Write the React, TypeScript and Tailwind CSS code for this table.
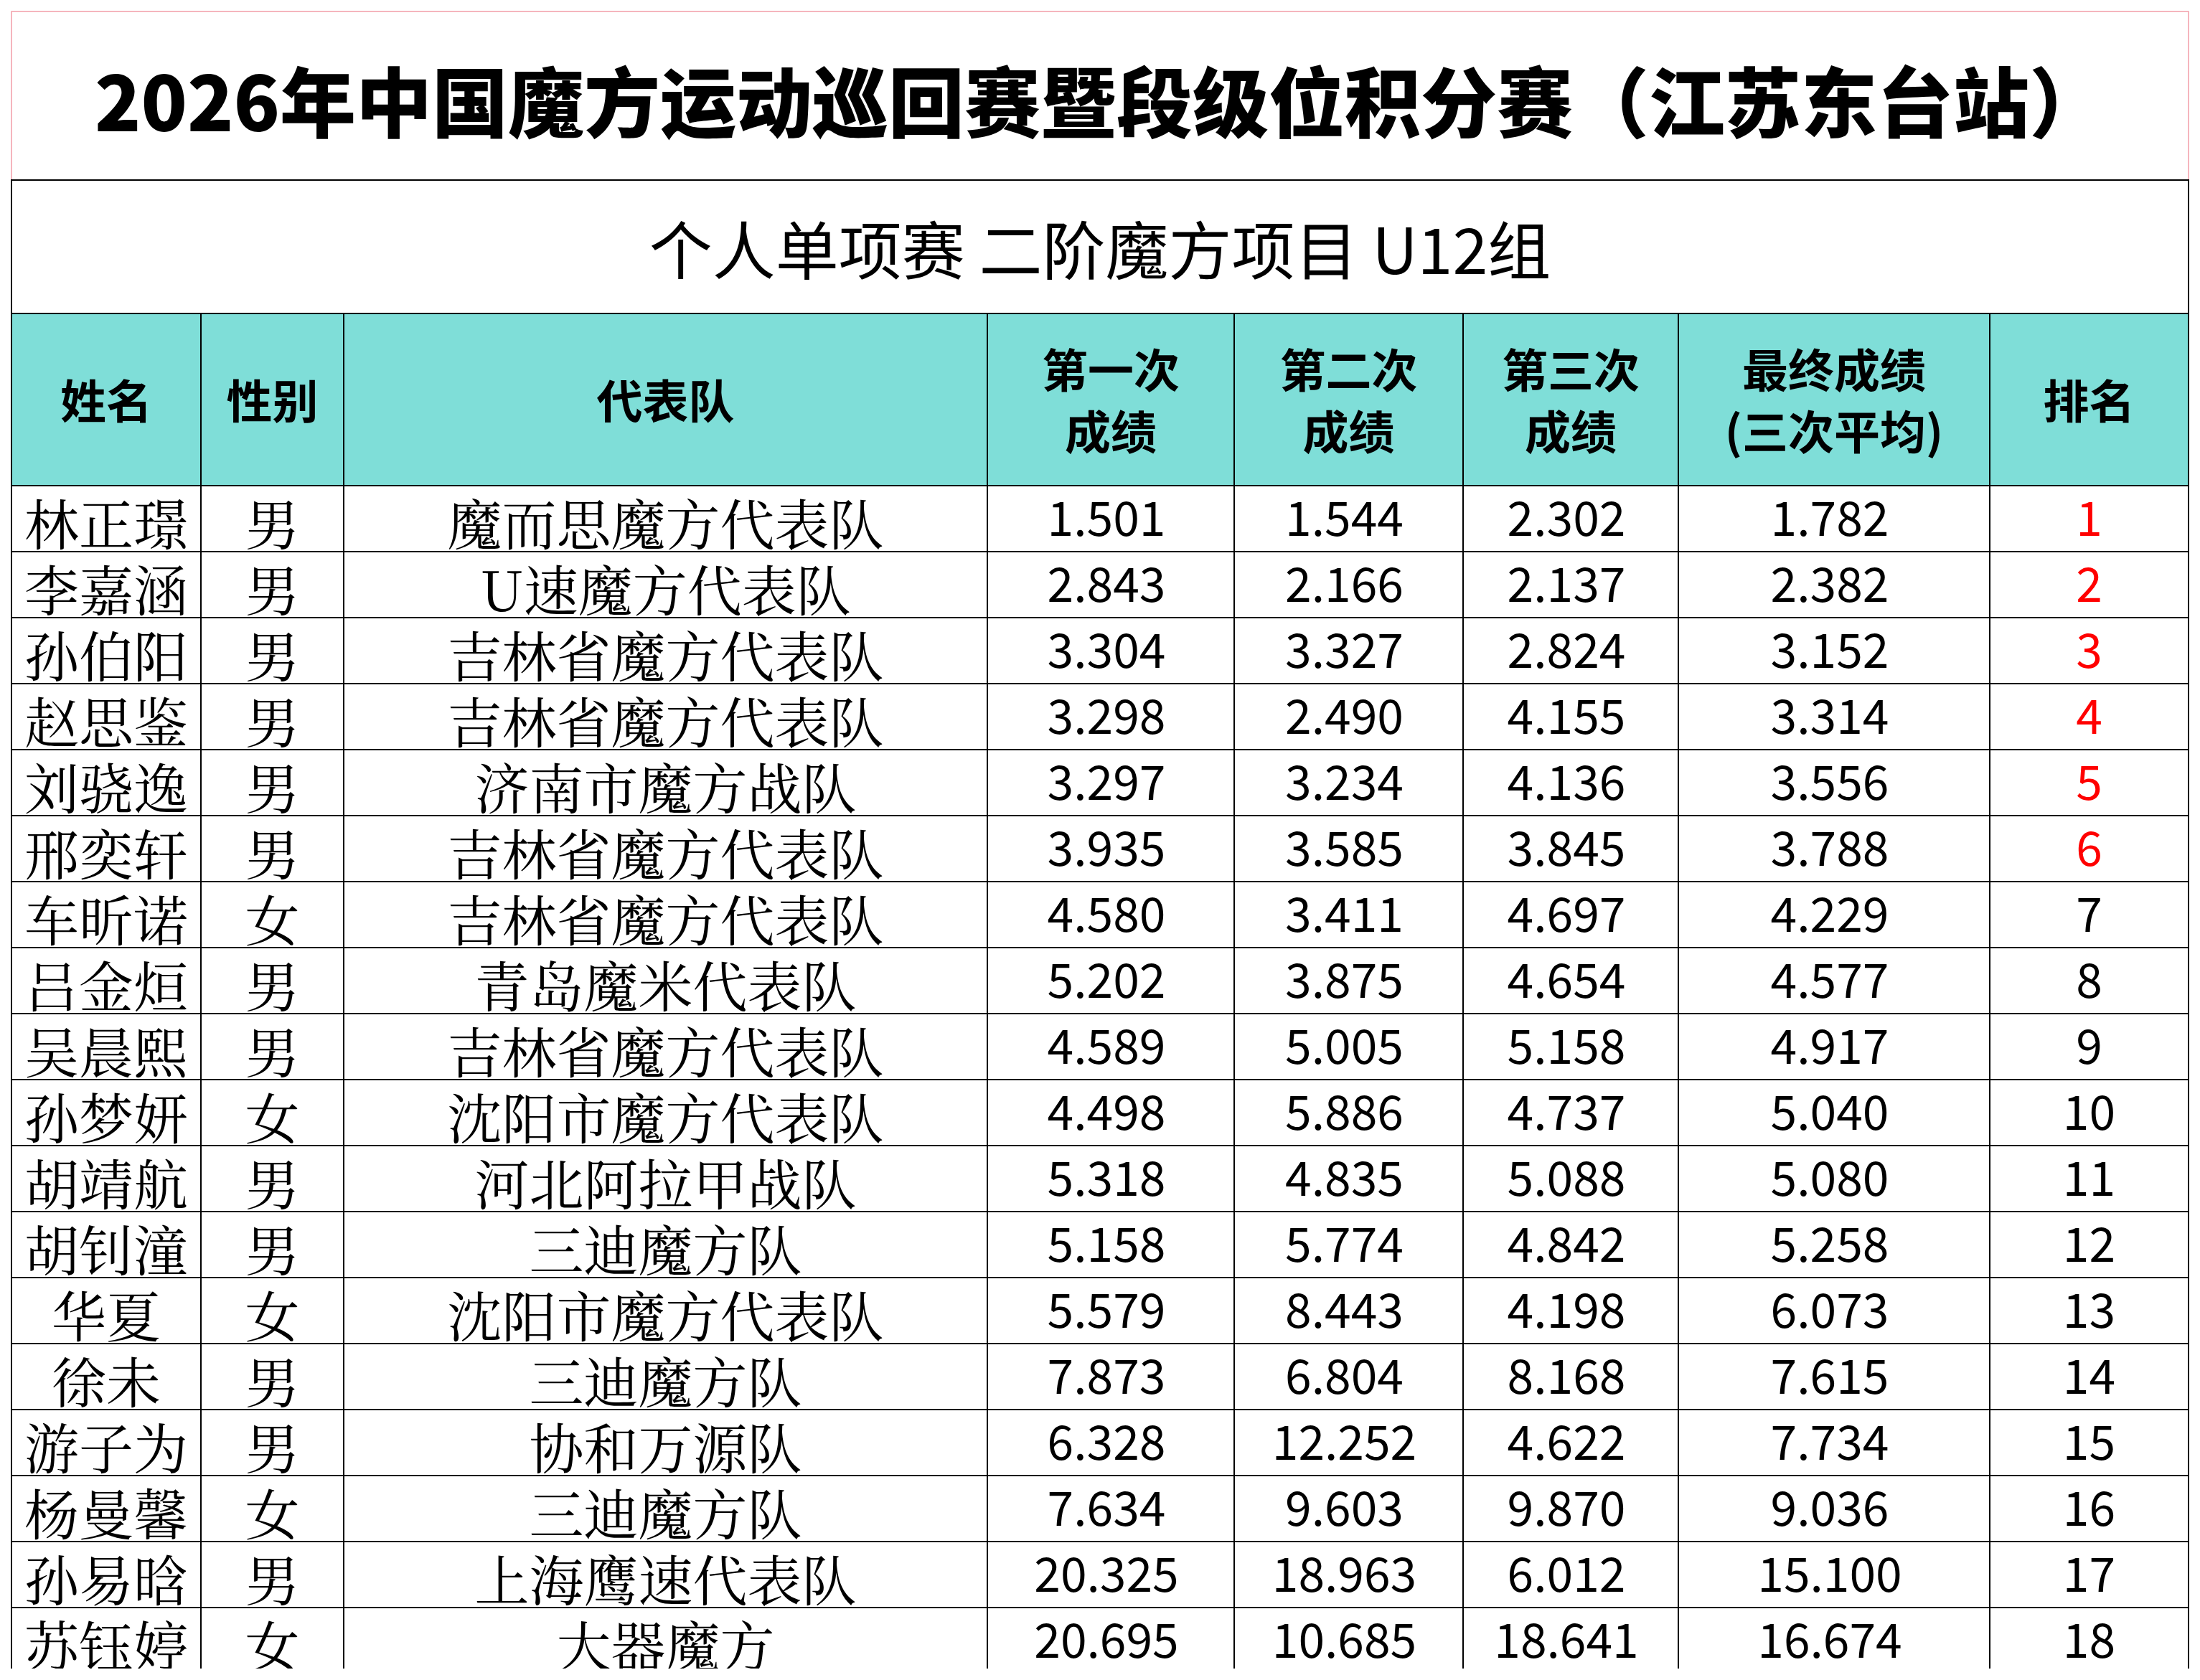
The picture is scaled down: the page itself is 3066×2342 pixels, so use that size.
const rows: [string, string, string, string, string, string, string][] = [
  ["林正璟", "男", "魔而思魔方代表队", "1.501", "1.544", "2.302", "1.782"],
  ["李嘉涵", "男", "U速魔方代表队", "2.843", "2.166", "2.137", "2.382"],
  ["孙伯阳", "男", "吉林省魔方代表队", "3.304", "3.327", "2.824", "3.152"],
  ["赵思鉴", "男", "吉林省魔方代表队", "3.298", "2.490", "4.155", "3.314"],
  ["刘骁逸", "男", "济南市魔方战队", "3.297", "3.234", "4.136", "3.556"],
  ["邢奕轩", "男", "吉林省魔方代表队", "3.935", "3.585", "3.845", "3.788"],
  ["车昕诺", "女", "吉林省魔方代表队", "4.580", "3.411", "4.697", "4.229"],
  ["吕金烜", "男", "青岛魔米代表队", "5.202", "3.875", "4.654", "4.577"],
  ["吴晨熙", "男", "吉林省魔方代表队", "4.589", "5.005", "5.158", "4.917"],
  ["孙梦妍", "女", "沈阳市魔方代表队", "4.498", "5.886", "4.737", "5.040"],
  ["胡靖航", "男", "河北阿拉甲战队", "5.318", "4.835", "5.088", "5.080"],
  ["胡钊潼", "男", "三迪魔方队", "5.158", "5.774", "4.842", "5.258"],
  ["华夏", "女", "沈阳市魔方代表队", "5.579", "8.443", "4.198", "6.073"],
  ["徐未", "男", "三迪魔方队", "7.873", "6.804", "8.168", "7.615"],
  ["游子为", "男", "协和万源队", "6.328", "12.252", "4.622", "7.734"],
  ["杨曼馨", "女", "三迪魔方队", "7.634", "9.603", "9.870", "9.036"],
  ["孙易晗", "男", "上海鹰速代表队", "20.325", "18.963", "6.012", "15.100"],
  ["苏钰婷", "女", "大器魔方", "20.695", "10.685", "18.641", "16.674"],
];

const serif = "font-['Noto_Serif_CJK_SC','Noto_Sans_CJK_SC',serif]";
const sans = "font-['Noto_Sans_CJK_SC',sans-serif]";

// header cells: teal, bold, centered
function Head({ children }: { children: React.ReactNode }) {
  return (
    <div className="flex h-[238px] items-center justify-center bg-[#7fded8] pb-[4px] text-center text-[64px] font-bold leading-[86px] text-black">
      <div>{children}</div>
    </div>
  );
}

function TextCell({ value }: { value: string }) {
  return (
    <div className={`flex h-[90px] items-end justify-center bg-white text-[76px] leading-[80px] text-black ${serif}`}>
      {value}
    </div>
  );
}

function NumCell({ value }: { value: string }) {
  return (
    <div className="flex h-[90px] items-center justify-center bg-white pb-[10px] pr-[12px] text-[66px] leading-[70px] text-black">
      {value}
    </div>
  );
}

function RankCell({ rank }: { rank: number }) {
  return (
    <div
      className={`flex h-[90px] items-center justify-center bg-white pb-[10px] text-[66px] leading-[70px] ${
        rank <= 6 ? "text-[#ff0000]" : "text-black"
      }`}
    >
      {rank}
    </div>
  );
}

export default function App() {
  return (
    <div className={`h-[2342px] w-[3066px] overflow-hidden bg-white ${sans}`}>
      <div className="ml-[15px] mt-[15px] h-[2311px] w-[3036px] overflow-hidden">
        {/* title */}
        <div className="flex h-[235px] items-center justify-center border-x-2 border-t-2 border-[#f5b5bd] pt-[6px] text-[106px] font-black leading-[130px] text-black">
          2026年中国魔方运动巡回赛暨段级位积分赛（江苏东台站）
        </div>

        {/* table: black background shows through the 2px gaps as borders */}
        <div className="grid grid-cols-[262px_197px_895px_342px_317px_298px_432px_275px] gap-[2px] bg-black p-[2px]">
          <div className="col-span-8 flex h-[184px] items-center justify-center bg-white text-[88px] leading-[110px] text-black">
            个人单项赛 二阶魔方项目 U12组
          </div>

          <Head>姓名</Head>
          <Head>性别</Head>
          <Head>代表队</Head>
          <Head>
            第一次
            <br />
            成绩
          </Head>
          <Head>
            第二次
            <br />
            成绩
          </Head>
          <Head>
            第三次
            <br />
            成绩
          </Head>
          <Head>
            最终成绩
            <br />
            (三次平均)
          </Head>
          <Head>排名</Head>

          {rows.map((r, i) => (
            <div key={i} className="contents">
              <TextCell value={r[0]} />
              <TextCell value={r[1]} />
              <TextCell value={r[2]} />
              <NumCell value={r[3]} />
              <NumCell value={r[4]} />
              <NumCell value={r[5]} />
              <NumCell value={r[6]} />
              <RankCell rank={i + 1} />
            </div>
          ))}
        </div>
      </div>
    </div>
  );
}
